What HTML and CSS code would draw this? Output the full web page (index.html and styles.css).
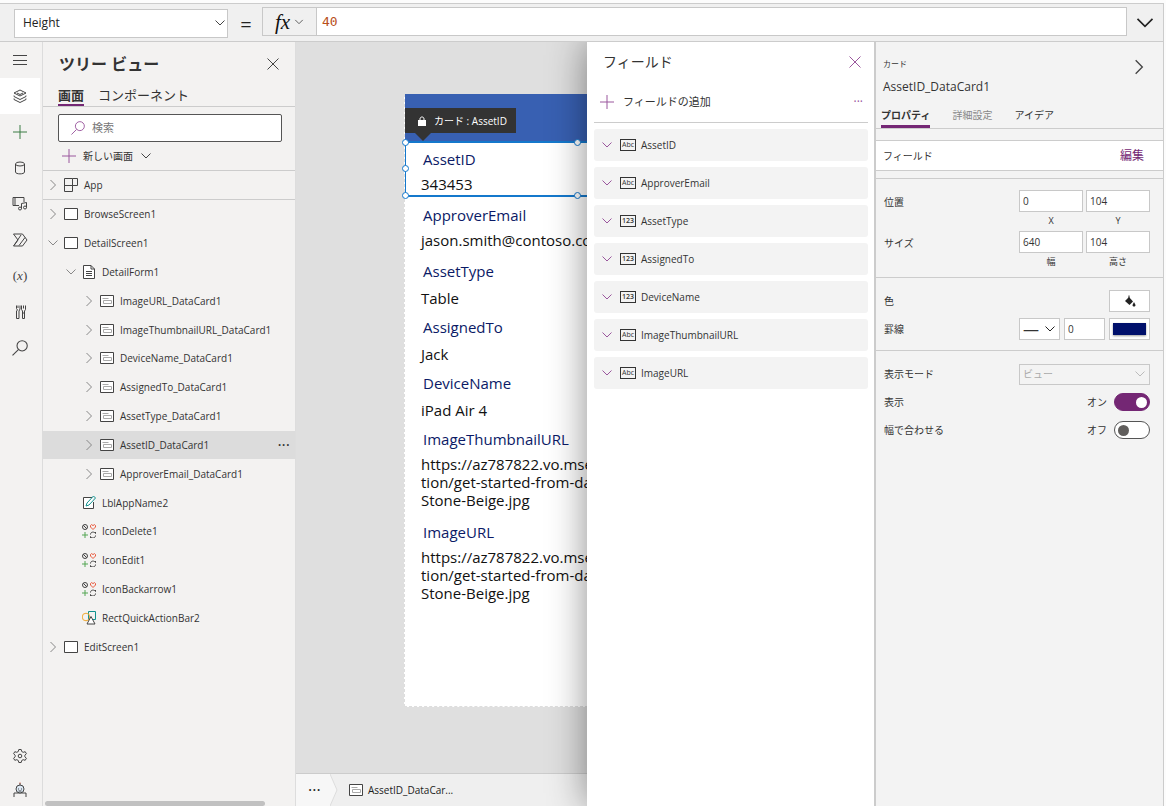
FILE: index.html
```html
<!DOCTYPE html>
<html lang="ja">
<head>
<meta charset="utf-8">
<title>AssetID_DataCard1</title>
<link rel="stylesheet" href="styles.css">
</head>
<body>
<svg class="sprite" aria-hidden="true">
  <symbol id="right" viewBox="0 0 12 12"><path d="M3.500 1l5 5-5 5"/></symbol>
  <symbol id="down" viewBox="0 0 12 12"><path d="M1.500 3.500L6 8l4.500-4.500"/></symbol>
  <symbol id="close" viewBox="0 0 12 12"><path d="M.5.5l11 11M11.500.5l-11 11"/></symbol>
  <symbol id="plus" viewBox="0 0 14 14"><path d="M7 0v14M0 7h14"/></symbol>
  <symbol id="glass" viewBox="0 0 15 15"><circle cx="9.500" cy="5.500" r="4.800"/><path d="M6 9L.5 14.500"/></symbol>
  <symbol id="app" viewBox="0 0 14 14"><path d="M.5.5h8v13h-8zM.5 7.500h13v-7h-5"/></symbol>
  <symbol id="screen" viewBox="0 0 14 14"><path class="paper" d="M.5 1.500h13v11H.5z"/></symbol>
  <symbol id="form" viewBox="0 0 14 14"><path class="paper" d="M1.500.5h7.500l3.500 3.500v9.500h-11z"/><path d="M9 .5V4h3.500M4 6.500h6M4 8.500h6M4 10.500h6"/></symbol>
  <symbol id="card" viewBox="0 0 14 14"><path class="paper" d="M.5 1.500h13v11H.5z"/><path class="soft" d="M2.500 4.500h6M3.500 6.500h8v3h-8z"/></symbol>
  <symbol id="label" viewBox="0 0 14 14"><path class="paper" d="M10 1.500H1.500v11h10V6"/><path class="teal" d="M4 10l1-3 6.500-7 2 2L7 9z"/></symbol>
  <symbol id="icons" viewBox="0 0 14 14"><circle cx="3" cy="3" r="2.500"/><path d="M1.200 1.200l3.600 3.600"/><path class="red" d="M11 5.500L8.500 3V1.500l1.200-1L11 1.700 12.300.5l1.200 1V3z"/><path class="green" d="M3 8v6M0 11h6"/><path d="M8.500 10.500c0-3 4-3 5-1V8M13.500 11.500c0 3-4 3-5 1V14"/></symbol>
  <symbol id="shape" viewBox="0 0 14 14"><path class="teal" d="M6.500.5h7v8h-7z"/><circle class="gold" cx="4" cy="6" r="3.800"/><path class="paper" d="M9 5.500l4 7.500H5z"/></symbol>
</svg>

<header class="formula">
  <div class="picker property">
    <select aria-label="プロパティ"><option>Height</option></select>
    <svg class="ic s12"><use href="#down"/></svg>
  </div>
  <span class="equals">=</span>
  <div class="expression">
    <button class="fx" aria-label="関数"><i>fx</i><svg class="ic s10"><use href="#down"/></svg></button>
    <input aria-label="数式" value="40">
  </div>
  <button class="expand" aria-label="展開"><svg class="ic s18"><use href="#down"/></svg></button>
</header>

<div class="workspace">
  <nav class="rail">
    <button aria-label="メニュー"><svg viewBox="0 0 16 16"><path d="M1 3.500h14M1 8.500h14M1 12.500h14"/></svg></button>
    <button class="active" aria-label="ツリー ビュー"><svg viewBox="0 0 16 16"><path d="M8 2l6 3-6 3-6-3zM2 7.500v1l6 3 6-3v-1M2 10.500v1l6 3 6-3v-1M5 5l3 1.500L11 5"/></svg></button>
    <button aria-label="挿入"><svg viewBox="0 0 16 16"><path class="greenplus" d="M8 1v14M1 8h14"/></svg></button>
    <button aria-label="データ"><svg viewBox="0 0 16 16"><ellipse cx="8" cy="4" rx="4.500" ry="2"/><path d="M3.500 4v8c0 2.500 9 2.500 9 0V4"/></svg></button>
    <button aria-label="メディア"><svg viewBox="0 0 16 16"><path d="M7 9.500H1v-8h11V6M3 1.500v8M9.500 12.500v-5l5-1v5"/><circle cx="8" cy="12.500" r="1.500"/><circle cx="13" cy="11.500" r="1.500"/></svg></button>
    <button aria-label="フロー"><svg viewBox="0 0 16 16"><path d="M1.500 2h9l4.500 6-4.500 6h-9L6 8zM9 3L2 13.500M13 5.500L7 13.500"/></svg></button>
    <button class="var" aria-label="変数">(<i>x</i>)</button>
    <button aria-label="ツール"><svg viewBox="0 0 16 16"><path d="M4.500 1.500v3l1 1.500-1 1v7.500h2.500V7l1-2V1.500M6 1.500v2.500M9.500 1.500v4l1 1.500v7.500h2V7l1-1.500v-4M10.500 9h2M11.500 1.500v3"/></svg></button>
    <button aria-label="検索"><svg viewBox="0 0 15 15"><use href="#glass"/></svg></button>
    <button class="bottom" aria-label="設定"><svg viewBox="0 0 16 16"><path d="M6.800 1.500h2.400l.5 2 1.500.8 2-.6 1.200 2-1.500 1.500v1.600l1.500 1.500-1.200 2-2-.6-1.500.8-.5 2H6.800l-.5-2-1.500-.8-2 .6-1.200-2 1.500-1.500V7.200L1.600 5.700l1.200-2 2 .6 1.500-.8z"/><circle cx="8" cy="8" r="1.800"/></svg></button>
    <button aria-label="仮想エージェント"><svg viewBox="0 0 16 16"><path d="M2 15v-4h12v4M8 3V1"/><circle class="robot" cx="8" cy="7" r="4"/><path d="M6 7h1M9 7h1M6.500 9h3"/><path class="tipdot" d="M8 .5v1"/></svg></button>
  </nav>

  <aside class="tree">
    <div class="tree-title"><h1>ツリー ビュー</h1><button aria-label="閉じる"><svg class="ic s12"><use href="#close"/></svg></button></div>
    <div class="tree-tabs"><button class="on">画面</button><button>コンポーネント</button></div>
    <div class="tree-tools">
      <label class="search"><svg class="ic s14 purple"><use href="#glass"/></svg><input placeholder="検索" aria-label="検索"></label>
      <button class="new"><svg class="ic s14 purple"><use href="#plus"/></svg>新しい画面<svg class="ic s12"><use href="#down"/></svg></button>
    </div>
    <button class="row app"><svg class="ic s12 tw"><use href="#right"/></svg><svg class="ic s14"><use href="#app"/></svg>App</button>
    <div class="rows">
      <button class="row"><svg class="ic s12 tw"><use href="#right"/></svg><svg class="ic s14"><use href="#screen"/></svg>BrowseScreen1</button>
      <button class="row"><svg class="ic s12 tw"><use href="#down"/></svg><svg class="ic s14"><use href="#screen"/></svg>DetailScreen1</button>
      <button class="row l1"><svg class="ic s12 tw"><use href="#down"/></svg><svg class="ic s14"><use href="#form"/></svg>DetailForm1</button>
      <button class="row l2"><svg class="ic s12 tw"><use href="#right"/></svg><svg class="ic s14"><use href="#card"/></svg>ImageURL_DataCard1</button>
      <button class="row l2"><svg class="ic s12 tw"><use href="#right"/></svg><svg class="ic s14"><use href="#card"/></svg>ImageThumbnailURL_DataCard1</button>
      <button class="row l2"><svg class="ic s12 tw"><use href="#right"/></svg><svg class="ic s14"><use href="#card"/></svg>DeviceName_DataCard1</button>
      <button class="row l2"><svg class="ic s12 tw"><use href="#right"/></svg><svg class="ic s14"><use href="#card"/></svg>AssignedTo_DataCard1</button>
      <button class="row l2"><svg class="ic s12 tw"><use href="#right"/></svg><svg class="ic s14"><use href="#card"/></svg>AssetType_DataCard1</button>
      <button class="row l2 selected"><svg class="ic s12 tw"><use href="#right"/></svg><svg class="ic s14"><use href="#card"/></svg>AssetID_DataCard1<span class="more">···</span></button>
      <button class="row l2"><svg class="ic s12 tw"><use href="#right"/></svg><svg class="ic s14"><use href="#card"/></svg>ApproverEmail_DataCard1</button>
      <button class="row leaf"><svg class="ic s14"><use href="#label"/></svg>LblAppName2</button>
      <button class="row leaf"><svg class="ic s14"><use href="#icons"/></svg>IconDelete1</button>
      <button class="row leaf"><svg class="ic s14"><use href="#icons"/></svg>IconEdit1</button>
      <button class="row leaf"><svg class="ic s14"><use href="#icons"/></svg>IconBackarrow1</button>
      <button class="row leaf"><svg class="ic s14"><use href="#shape"/></svg>RectQuickActionBar2</button>
      <button class="row"><svg class="ic s12 tw"><use href="#right"/></svg><svg class="ic s14"><use href="#screen"/></svg>EditScreen1</button>
    </div>
    <div class="scroll"></div>
  </aside>

  <main class="canvas">
    <div class="stage">
      <div class="artboard">
        <div class="appbar"></div>
        <section class="datacard">
          <h2>AssetID</h2><p>343453</p>
          <div class="selection"><span class="h tl"></span><span class="h tc"></span><span class="h ml"></span><span class="h bl"></span><span class="h bc"></span></div>
          <div class="tip"><svg viewBox="0 0 8 10"><path d="M0 4h8v6H0z"/><path class="shackle" d="M2 4.500V3c0-2.700 4-2.700 4 0v1.500"/></svg>カード : AssetID</div>
        </section>
        <section class="datacard"><h2>ApproverEmail</h2><p>jason.smith@contoso.com</p></section>
        <section class="datacard lookup"><h2>AssetType</h2><p>Table</p></section>
        <section class="datacard lookup"><h2>AssignedTo</h2><p>Jack</p></section>
        <section class="datacard lookup"><h2>DeviceName</h2><p>iPad Air 4</p></section>
        <section class="datacard long"><h2>ImageThumbnailURL</h2><p>https://az787822.vo.msecnd.net/documenta<br>tion/get-started-from-data/<br>Stone-Beige.jpg</p></section>
        <section class="datacard long"><h2>ImageURL</h2><p>https://az787822.vo.msecnd.net/documenta<br>tion/get-started-from-data/<br>Stone-Beige.jpg</p></section>
      </div>
    </div>
    <footer class="crumbs">
      <button class="dots" aria-label="その他">···</button>
      <svg class="arrow" viewBox="0 0 8 32" preserveAspectRatio="none"><path d="M0 0l7 16-7 16"/></svg>
      <button class="crumb"><svg class="ic s14"><use href="#card"/></svg>AssetID_DataCar...</button>
    </footer>
  </main>

  <section class="fields" id="fields">
    <div class="fields-title"><h2>フィールド</h2><button class="purple" aria-label="閉じる"><svg class="ic s12"><use href="#close"/></svg></button></div>
    <div class="fields-add"><button><svg class="ic s14 purple"><use href="#plus"/></svg>フィールドの追加</button><button class="more purple" aria-label="その他">···</button></div>
    <ul>
      <li><button><svg class="ic s12 purple"><use href="#down"/></svg><span class="type">Abc</span>AssetID</button></li>
      <li><button><svg class="ic s12 purple"><use href="#down"/></svg><span class="type">Abc</span>ApproverEmail</button></li>
      <li><button><svg class="ic s12 purple"><use href="#down"/></svg><span class="type num">123</span>AssetType</button></li>
      <li><button><svg class="ic s12 purple"><use href="#down"/></svg><span class="type num">123</span>AssignedTo</button></li>
      <li><button><svg class="ic s12 purple"><use href="#down"/></svg><span class="type num">123</span>DeviceName</button></li>
      <li><button><svg class="ic s12 purple"><use href="#down"/></svg><span class="type">Abc</span>ImageThumbnailURL</button></li>
      <li><button><svg class="ic s12 purple"><use href="#down"/></svg><span class="type">Abc</span>ImageURL</button></li>
    </ul>
  </section>

  <aside class="props">
    <div class="props-head">
      <div><small>カード</small><h2>AssetID_DataCard1</h2></div>
      <button aria-label="折りたたむ"><svg class="ic s16"><use href="#right"/></svg></button>
    </div>
    <div class="props-tabs"><button class="on">プロパティ</button><button class="muted">詳細設定</button><button>アイデア</button></div>
    <div class="field-link"><span>フィールド</span><a href="#fields">編集</a></div>
    <div class="group geometry">
      <div class="prop"><span>位置</span>
        <label><input value="0"><small>X</small></label><label><input value="104"><small>Y</small></label></div>
      <div class="prop"><span>サイズ</span>
        <label><input value="640"><small>幅</small></label><label><input value="104"><small>高さ</small></label></div>
    </div>
    <div class="group paint">
      <div class="prop"><span>色</span>
        <button class="swatch" aria-label="色"><svg viewBox="0 0 12 12"><path d="M1 6l4-4 4 4.500L5.500 10z"/><path class="handle" d="M5 5V.5"/><path d="M10 7l1.500 3c0 2-3 2-3 0z"/></svg></button></div>
      <div class="prop"><span>罫線</span>
        <div class="picker line"><select aria-label="罫線のスタイル"><option>—</option></select><svg class="ic s12"><use href="#down"/></svg></div>
        <input class="thick" aria-label="罫線の太さ" value="0">
        <button class="swatch navy" aria-label="罫線の色"><span></span></button></div>
    </div>
    <div class="group display">
      <div class="prop"><label for="mode">表示モード</label>
        <div class="picker mode"><select id="mode" disabled><option>ビュー</option></select><svg class="ic s12"><use href="#down"/></svg></div></div>
      <div class="prop"><label for="visible">表示</label><em>オン</em><input type="checkbox" class="toggle" id="visible" checked></div>
      <div class="prop"><label for="fit">幅で合わせる</label><em>オフ</em><input type="checkbox" class="toggle" id="fit"></div>
    </div>
  </aside>
</div>
</body>
</html>
```
FILE: styles.css
```css
* { box-sizing: border-box; }
html, body { height: 100%; }
body {
  margin: 0; padding: 3px 2px 0 0; display: flex; flex-direction: column;
  background: #fcfcfc; color: #333; overflow: hidden;
  font: 10px/16px "Open Sans", "Noto Sans CJK JP", sans-serif;
}
h1, h2, p, ul { margin: 0; padding: 0; font-weight: 400; }
ul { list-style: none; }
em { font-style: normal; }
button, input, select { font: inherit; color: inherit; margin: 0; }
button { border: 0; padding: 0; background: none; text-align: left; display: flex; align-items: center; white-space: nowrap; }
.sprite { display: none; }
svg { fill: none; stroke: currentColor; stroke-width: 1; flex: none; }
.ic { color: #444; display: block; }
.s10 { width: 10px; height: 10px; }
.s12 { width: 12px; height: 12px; }
.s14 { width: 14px; height: 14px; }
.s16 { width: 16px; height: 16px; }
.s18 { width: 20px; height: 20px; }
.purple, .purple .ic { color: #9a569d; }
.paper { fill: #fff; }
.soft { stroke: #aaa; }
.teal { stroke: #11918f; }
.red { stroke: #e8583c; }
.green { stroke: #52a552; }
.gold { stroke: #f0a830; }

/* formula bar */
.formula {
  flex: none; height: 39px; display: flex; align-items: center; padding-left: 14px;
  background: #f0f0f0; border: solid #ccc; border-width: 1px 1px 1px 0;
}
.picker { position: relative; display: flex; align-items: center; background: #fff; border: 1px solid #c8c8c8; }
.picker select { appearance: none; width: 100%; height: 100%; border: 0; background: none; padding: 0 8px; outline: 0; opacity: 1; }
.picker .ic { position: absolute; right: 1px; pointer-events: none; }
.property { width: 214px; height: 29px; margin-top: 1px; font-size: 12px; color: #222; }
.equals { width: 34px; text-align: center; padding: 4px 0 0 2px; font-size: 20px; color: #222; }
.expression { flex: 1; display: flex; height: 29px; margin-bottom: 2px; border: 1px solid #c8c8c8; background: #fff; }
.fx { width: 54px; justify-content: center; gap: 4px; background: #f0f0f0; border-right: 1px solid #c8c8c8; }
.fx i { font: italic 21px/20px "Liberation Serif", serif; color: #111; }
.expression input { flex: 1; min-width: 0; border: 0; outline: 0; padding: 0 5px; background: none; color: #b8501c; font: 13px "DejaVu Sans Mono", monospace; }
.expand { width: 36px; justify-content: center; }
.expand .ic { color: #222; }

.workspace { flex: 1; min-height: 0; display: grid; grid-template-columns: 43px 253px minmax(0, 1fr) 287px 290px; border-right: 1px solid #ccc; }
.workspace { grid-template-columns: 43px 253px minmax(0, 1fr) 287px 289px; }

/* icon rail */
.rail { display: flex; flex-direction: column; background: #f3f2f1; border-right: 1px solid #dcdcdc; }
.rail button { width: 40px; height: 36px; justify-content: center; color: #444; }
.rail svg { width: 16px; height: 16px; }
.rail .active { background: #fff; }
.rail .bottom { margin-top: auto; }
.rail button:last-child { height: 32px; }
.rail .var { font: 13px "Liberation Serif", serif; color: #444; }
.greenplus { stroke: #3a7d44; }
.robot { fill: #dbe8f4; }
.tipdot { stroke: #d0402a; }

/* tree view */
.tree { position: relative; min-width: 0; background: #f3f2f1; border-right: 1px solid #ddd; }
.tree-title { display: flex; align-items: center; justify-content: space-between; height: 44px; padding: 0 16px 0 16px; }
.tree-title h1 { font-size: 16px; font-weight: 700; }
.tree-tabs { display: flex; gap: 14px; height: 21px; padding-left: 15px; border-bottom: 1px solid #ccc; font-size: 13px; }
.tree-tabs button { border-bottom: 2px solid transparent; }
.tree-tabs .on { font-weight: 700; border-color: #742774; }
.tree-tools { padding: 7px 13px 0 15px; height: 64px; border-bottom: 1px solid #ccc; }
.search { display: flex; align-items: center; gap: 7px; height: 28px; padding-left: 12px; background: #fff; border: 1px solid #555; border-radius: 2px; font-size: 11px; }
.search input { flex: 1; min-width: 0; border: 0; outline: 0; padding: 0; background: none; }
.search input::placeholder { color: #777; }
.new { height: 28px; gap: 7px; padding-left: 4px; }
.row { position: relative; width: 100%; gap: 6px; padding-left: 4px; }
.row .tw { color: #888; margin-right: -1px; }
.app { height: 29px; border-bottom: 1px solid #ccc; }
.rows { display: grid; grid-auto-rows: 1fr; height: 461px; }
.l1 { padding-left: 22px; }
.l2 { padding-left: 40px; }
.leaf { padding-left: 39px; }
.selected { background: #dcdcdc; }
.more { margin-left: auto; padding-right: 5px; font-size: 16px; }
.scroll { position: absolute; left: 2px; bottom: 0; width: 220px; height: 5px; border-radius: 3px; background: #c1c1c1; }

/* canvas */
.canvas { display: flex; flex-direction: column; min-width: 0; background: #dfdfdf; }
.stage { flex: 1; min-height: 0; overflow: hidden; padding: 52px 0 0 108px; }
.artboard { width: 360px; height: 613px; background: #fff; border: 1px dashed #ddd; border-top: 0; color: #111; font-size: 15px; }
.appbar { height: 47px; background: #3860b2; }
.datacard { position: relative; height: 56px; padding: 8px 0 0 16px; line-height: 18px; }
.datacard h2 { padding-left: 2px; font-size: 15px; line-height: 20px; color: #0b1a66; }
.datacard p { padding-top: 6px; white-space: nowrap; }
.lookup p { padding-top: 8px; }
.long { height: 93px; }
.selection { position: absolute; inset: 0 -1px 0 0; border: 2px solid #1478cc; border-left-width: 1px; }
.h { position: absolute; width: 7px; height: 7px; margin: -4px; border: 1px solid #1478cc; border-radius: 50%; background: #fff; }
.tl, .tc { top: 0; }
.bl, .bc { bottom: 0; }
.tl, .ml, .bl { left: 0; }
.tc, .bc { left: 172px; }
.ml { top: 50%; }
.tip { position: absolute; left: 0; bottom: 64px; display: flex; align-items: center; gap: 8px; height: 25px; padding: 0 9px 0 13px; background: #333; color: #fff; font-size: 10px; white-space: nowrap; }
.tip svg { width: 8px; height: 10px; fill: #fff; stroke: none; }
.tip .shackle { fill: none; stroke: #fff; }
.tip::after { content: ""; position: absolute; left: 10px; top: 100%; border: 8px solid transparent; border-top-color: #333; border-bottom: 0; }
.crumbs { flex: none; height: 33px; display: flex; border-top: 1px solid #ccc; background: #efefef; color: #222; }
.dots { width: 34px; padding-left: 12px; font-size: 16px; background: #f7f7f7; }
.arrow { width: 8px; height: 32px; fill: #f7f7f7; stroke: #ddd; }
.crumb { gap: 5px; margin-left: 11px; }

/* field list */
.fields { position: relative; padding: 0 6px 0 7px; background: #fff; box-shadow: 0 0 36px rgba(0, 0, 0, .45); clip-path: inset(0 0 0 -60px); }
.fields-title { display: flex; align-items: center; justify-content: space-between; height: 40px; padding: 0 7px 0 9px; }
.fields-title h2 { font-size: 14px; }
.fields-add { display: flex; justify-content: space-between; height: 41px; padding: 0 0 0 6px; border-bottom: 1px solid #ccc; font-size: 11px; }
.fields-add button { gap: 9px; }
.fields-add .more { font-size: 12px; }
.fields ul { display: grid; gap: 6px; padding-top: 6px; }
.fields li button { width: 100%; height: 32px; gap: 7px; padding-left: 7px; border-radius: 3px; background: #f3f3f3; }
.type { width: 16px; height: 12px; border: 1px solid #333; font-size: 7px; line-height: 10px; text-align: center; margin-right: -2px; }
.num { font-weight: 600; }

/* properties */
.props { background: #f3f3f3; border-left: 2px solid #ccc; }
.props-head { display: flex; justify-content: space-between; height: 62px; padding: 14px 16px 0 7px; }
.props-head small { display: block; font-size: 8px; }
.props-head h2 { font-size: 12px; line-height: 16px; padding-top: 7px; }
.props-head button { height: 22px; }
.props-tabs { display: flex; height: 25px; gap: 22px; padding-left: 5px; border-bottom: 1px solid #ccc; }
.props-tabs button { border-bottom: 3px solid transparent; }
.props-tabs .on { font-weight: 700; border-color: #742774; }
.props-tabs .muted { color: #888; }
.field-link { display: flex; align-items: center; justify-content: space-between; height: 31px; margin: 11px 0 7px; padding: 0 19px 0 7px; background: #fff; border: solid #ccc; border-width: 1px 0; }
.field-link a { color: #742774; text-decoration: none; font-size: 12px; }
.group { border-top: 1px solid #ccc; padding: 0 13px 0 8px; }
.prop { display: flex; gap: 3px; }
.prop > :first-child { flex: 1; }
.prop input:not(.toggle) { display: block; height: 22px; padding: 0 3px; border: 1px solid #c8c8c8; background: #fff; outline: 0; }
.geometry { padding-top: 11px; height: 99px; }
.geometry .prop { height: 41px; }
.geometry .prop span { line-height: 24px; }
.geometry input { width: 64px; }
.geometry small { display: block; text-align: center; font-size: 9px; line-height: 17px; }
.paint { padding-top: 12px; height: 73px; }
.paint .prop { align-items: center; gap: 4px; height: 22px; margin-bottom: 6px; }
.swatch { width: 41px; height: 22px; justify-content: center; background: #fff; border: 1px solid #c8c8c8; }
.swatch svg { width: 12px; height: 12px; fill: #222; stroke: none; }
.swatch .handle { stroke: #222; }
.navy span { width: 33px; height: 12px; background: #00106b; box-shadow: 0 1px 2px rgba(0, 0, 0, .4); }
.thick { width: 41px; }
.line { width: 41px; height: 22px; }
.line select { padding: 0 3px; font-size: 16px; }
.line .ic { right: 3px; color: #222; }
.display { padding-top: 12px; }
.display .prop { align-items: center; gap: 7px; height: 22px; margin-bottom: 6px; }
.mode { width: 131px; height: 21px; background: #f3f3f3; }
.mode select { padding: 0 3px; color: #aaa; }
.mode .ic { right: 3px; color: #bbb; }
.toggle { appearance: none; display: flex; align-items: center; width: 36px; height: 18px; padding: 0 3px; border: 1px solid #555; border-radius: 9px; background: #fff; }
.toggle::before { content: ""; width: 11px; height: 11px; border-radius: 50%; background: #605e5c; }
.toggle:checked { justify-content: flex-end; background: #742774; border-color: #742774; padding-right: 2px; }
.toggle:checked::before { background: #fff; }
```
